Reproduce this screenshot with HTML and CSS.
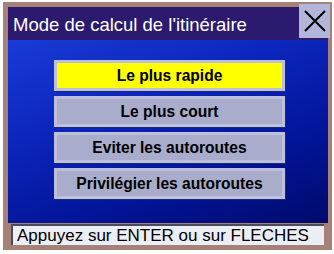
FILE: index.html
```html
<!DOCTYPE html>
<html>
<head>
<meta charset="utf-8">
<link rel="stylesheet" href="styles.css">
</head>
<body>
<div class="frame">
  <div class="titlebar">
    <div class="title">Mode de calcul de l'itinéraire</div>
    <div class="close">
      <svg width="24" height="24" viewBox="0 0 24 24"><path d="M2 2 L22 22 M22 2 L2 22" stroke="#000" stroke-width="2" fill="none"/></svg>
    </div>
  </div>
  <div class="content">
    <div class="menu">
      <div class="btn active">Le plus rapide</div>
      <div class="btn">Le plus court</div>
      <div class="btn">Eviter les autoroutes</div>
      <div class="btn">Privilégier les autoroutes</div>
    </div>
  </div>
  <div class="status">Appuyez sur ENTER ou sur FLECHES</div>
</div>
</body>
</html>
```
FILE: styles.css
```css
html, body {
  margin: 0;
  padding: 0;
  background: #ffffff;
  width: 334px;
  height: 254px;
  overflow: hidden;
}
.frame {
  margin: 2px 2px 0 3px;
  width: 329px;
  height: 248px;
  box-sizing: border-box;
  background: #a68178;
  display: flex;
  flex-direction: column;
  padding: 5px 4px 5px 5px;
  font-family: "Liberation Sans", Arial, sans-serif;
}
.titlebar {
  display: flex;
  height: 33px;
  background: #2b1a6e;
}
.title {
  flex: 1;
  color: #ffffff;
  font-size: 18.5px;
  line-height: 36px;
  padding-left: 5px;
}
.close {
  width: 31px;
  margin: -3px -2px 0 0;
  height: 34px;
  background: #b3b6da;
  display: flex;
  align-items: center;
  justify-content: center;
}
.content {
  flex: 1;
  background: linear-gradient(160deg, #1a3bd6 0%, #0c26bc 35%, #021496 70%, #000a6c 100%);
  padding: 20px 0 0 46px;
}
.menu {
  width: 231px;
  display: flex;
  flex-direction: column;
  gap: 5px;
}
.btn {
  height: 31px;
  box-sizing: border-box;
  border: 3px solid #bcc0dc;
  background: #a9adcb;
  box-shadow: 1px 1px 0 #1a2a70;
  font-size: 15.6px;
  font-weight: bold;
  color: #000;
  text-align: center;
  line-height: 25px;
}
.btn.active {
  background: #ffff00;
}
.status {
  margin: 1px 4px 0 3px;
  height: 21px;
  box-sizing: border-box;
  background: #eceef6;
  border-left: 2px solid #4a4a58;
  border-top: 2px solid #4a4a58;
  font-size: 17px;
  line-height: 19px;
  padding-left: 4px;
  color: #000;
}
```
